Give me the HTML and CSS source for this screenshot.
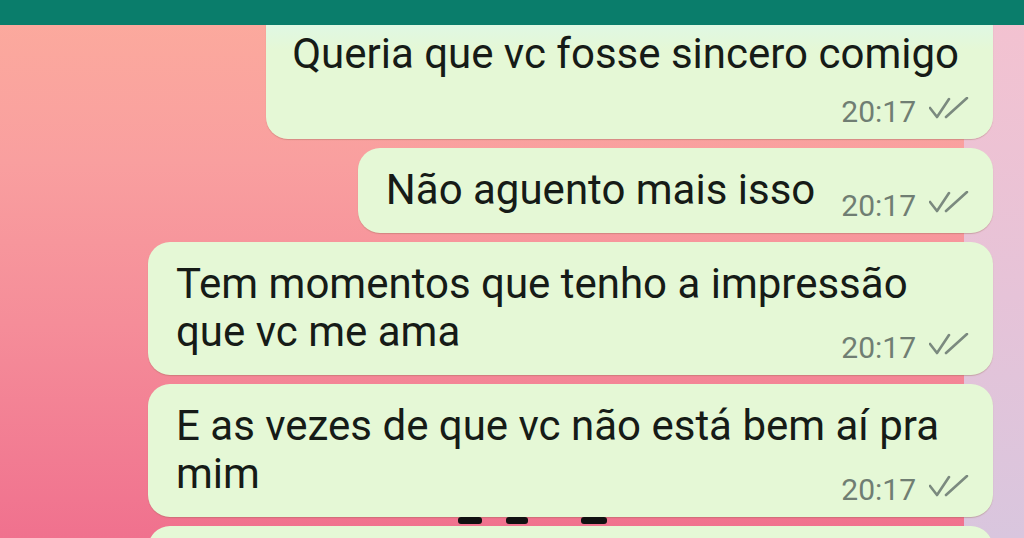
FILE: index.html
```html
<!DOCTYPE html>
<html lang="pt">
  <head>
    <title>Conversa</title>
    <meta name="viewport" content="width=device-width, initial-scale=1" />
    <link rel="stylesheet" href="styles.css">
  </head>
  <body>
    <div class="tela">
      <div class="barra"></div>

      <div class="conversa">
        <div class="balao solo">
          <span class="texto">Queria que vc fosse sincero comigo</span><span class="meta"><span class="hora">20:17</span><svg class="visto" viewBox="0 0 40 22"><path d="M1 11 L8 20 L20 2 M17 20 L38 1" /></svg></span>
        </div>

        <div class="balao">
          <span class="texto">Não aguento mais isso</span><span class="meta"><span class="hora">20:17</span><svg class="visto" viewBox="0 0 40 22"><path d="M1 11 L8 20 L20 2 M17 20 L38 1" /></svg></span>
        </div>

        <div class="balao">
          <span class="texto">Tem momentos que tenho a impressão que vc me ama</span><span class="meta"><span class="hora">20:17</span><svg class="visto" viewBox="0 0 40 22"><path d="M1 11 L8 20 L20 2 M17 20 L38 1" /></svg></span>
        </div>

        <div class="balao">
          <span class="texto">E as vezes de que vc não está bem aí pra mim</span><span class="meta"><span class="hora">20:17</span><svg class="visto" viewBox="0 0 40 22"><path d="M1 11 L8 20 L20 2 M17 20 L38 1" /></svg></span>
        </div>

        <div class="balao ultimo">
          <span class="texto">&nbsp;</span>
        </div>
      </div>

      <!-- restos de texto riscado entre os baloes -->
      <div class="risco" id="risco1"></div>
      <div class="risco" id="risco2"></div>
      <div class="risco" id="risco3"></div>
    </div>
  </body>
</html>
```

FILE: styles.css
```css
body {
  margin: 0;
  font-family: Roboto, "Noto Sans", sans-serif;
}

.tela {
  position: relative;
  width: 1024px;
  height: 538px;
  overflow: hidden;
  display: flex;
  flex-direction: column;
  background:
    linear-gradient(to bottom, #f4c2d0, #e6c3d8 55%, #d9c6de) right top / 60px 100% no-repeat,
    linear-gradient(to bottom, #fcab9d 0%, #f99f9f 30%, #f58d99 60%, #f0718e 100%);
}

.barra {
  height: 25px;
  flex-shrink: 0;
  background-color: #0a7d6b;
}

.conversa {
  flex: 1;
  overflow: hidden;
  display: flex;
  flex-direction: column;
  align-items: flex-end;
  gap: 9px;
  padding-right: 31px;
}

.balao {
  box-sizing: border-box;
  max-width: 845px;
  padding: 18px 24px 12px 28px;
  background-color: #e5f8d6;
  border-radius: 22px;
  box-shadow: 0 1px 1px rgba(150, 100, 80, 0.35);
  font-size: 42px;
  line-height: 48px;
  color: #161b17;
  flex-shrink: 0;
}

.solo {
  margin-top: -13px;
  padding-left: 26px;
  padding-right: 34px;
  border-top-left-radius: 0;
  border-top-right-radius: 0;
  background: linear-gradient(to bottom, #ddf8ea, #e5f8d6 30%);
}

.meta {
  float: right;
  margin-top: 25px;
  margin-left: 26px;
  white-space: nowrap;
  font-size: 30px;
  line-height: 30px;
  color: #707e73;
}

.solo .meta {
  float: none;
  display: block;
  margin-top: 19px;
  margin-right: -10px;
  text-align: right;
}

.visto {
  width: 40px;
  height: 22px;
  margin-left: 13px;
  vertical-align: 3px;
  fill: none;
  stroke: #7b8a7f;
  stroke-width: 2.6;
  stroke-linecap: round;
  stroke-linejoin: round;
}

.ultimo {
  width: 845px;
  height: 80px;
}

.risco {
  position: absolute;
  top: 517px;
  height: 7px;
  border-radius: 3px;
  background-color: #111;
}

#risco1 {
  left: 458px;
  width: 24px;
}
#risco2 {
  left: 506px;
  width: 22px;
}
#risco3 {
  left: 581px;
  width: 26px;
}
```
